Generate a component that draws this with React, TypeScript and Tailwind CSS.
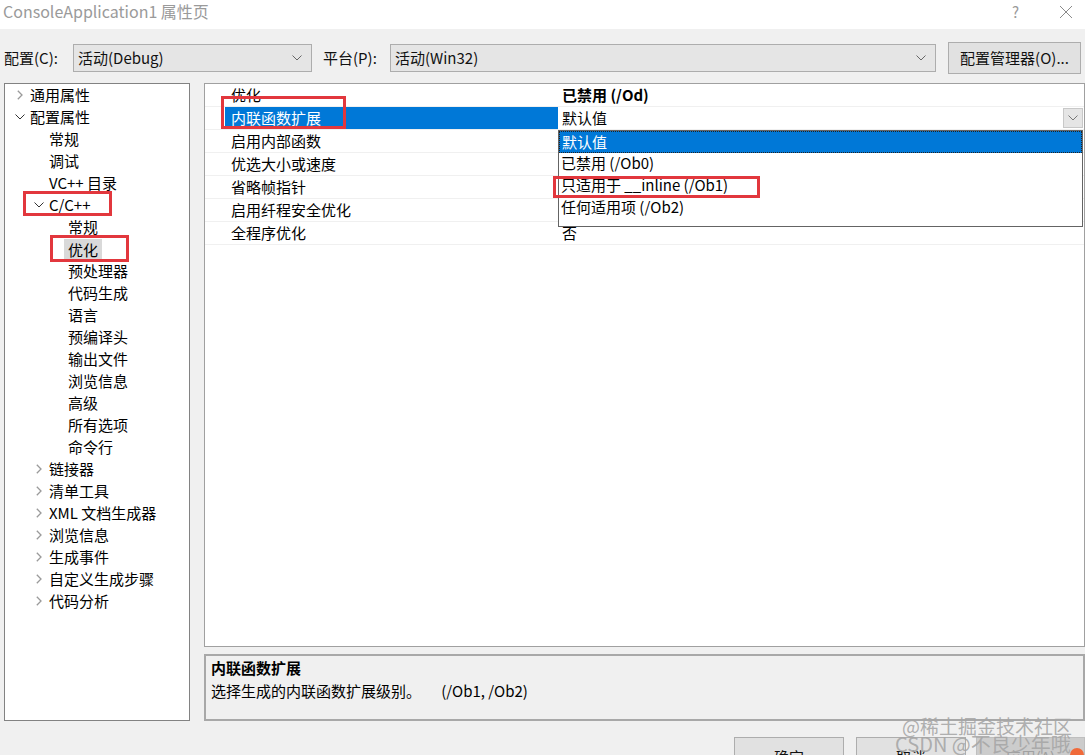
import React from "react";

const FONT = '"Noto Sans CJK SC", "Noto Sans", sans-serif';

type TreeItem = {
  label: string;
  level: 0 | 1 | 2;
  arrow?: "right" | "down";
  selected?: boolean;
};

const tree: TreeItem[] = [
  { label: "通用属性", level: 0, arrow: "right" },
  { label: "配置属性", level: 0, arrow: "down" },
  { label: "常规", level: 1 },
  { label: "调试", level: 1 },
  { label: "VC++ 目录", level: 1 },
  { label: "C/C++", level: 1, arrow: "down" },
  { label: "常规", level: 2 },
  { label: "优化", level: 2, selected: true },
  { label: "预处理器", level: 2 },
  { label: "代码生成", level: 2 },
  { label: "语言", level: 2 },
  { label: "预编译头", level: 2 },
  { label: "输出文件", level: 2 },
  { label: "浏览信息", level: 2 },
  { label: "高级", level: 2 },
  { label: "所有选项", level: 2 },
  { label: "命令行", level: 2 },
  { label: "链接器", level: 1, arrow: "right" },
  { label: "清单工具", level: 1, arrow: "right" },
  { label: "XML 文档生成器", level: 1, arrow: "right" },
  { label: "浏览信息", level: 1, arrow: "right" },
  { label: "生成事件", level: 1, arrow: "right" },
  { label: "自定义生成步骤", level: 1, arrow: "right" },
  { label: "代码分析", level: 1, arrow: "right" },
];

// values of rows 3-6 sit under the open list, so they are left empty
const props = [
  { name: "优化", value: "已禁用 (/Od)", bold: true },
  { name: "内联函数扩展", value: "默认值", selected: true },
  { name: "启用内部函数", value: "" },
  { name: "优选大小或速度", value: "" },
  { name: "省略帧指针", value: "" },
  { name: "启用纤程安全优化", value: "" },
  { name: "全程序优化", value: "否" },
];

const options = ["默认值", "已禁用 (/Ob0)", "只适用于 __inline (/Ob1)", "任何适用项 (/Ob2)"];

function ChevronDown({ color = "#555" }: { color?: string }) {
  return (
    <svg width="10" height="6" viewBox="0 0 10 6">
      <path d="M0.5 0.5 L5 5 L9.5 0.5" fill="none" stroke={color} strokeWidth="1" />
    </svg>
  );
}

function ChevronRight() {
  return (
    <svg width="6" height="10" viewBox="0 0 6 10">
      <path d="M0.8 0.8 L5 5 L0.8 9.2" fill="none" stroke="#9a9a9a" strokeWidth="1.3" />
    </svg>
  );
}

function Combo({ text, className }: { text: string; className: string }) {
  return (
    <div
      className={`h-[28px] flex items-center justify-between border border-[#adadad] bg-[#e5e5e5] pl-[4px] pr-[9px] text-[15px] text-[#111] ${className}`}
    >
      <span>{text}</span>
      <ChevronDown color="#666" />
    </div>
  );
}

function Tree() {
  const pad = ["pl-[5px]", "pl-[24px]", "pl-[43px]"];
  return (
    <div className="w-[186px] h-full bg-white border border-[#828282]">
      {tree.map((t, i) => (
        <div key={i} className={`h-[22px] flex items-center ${pad[t.level]} text-[15px] leading-[20px] text-black`}>
          <span className="w-[20px] flex items-center pl-[7px]">
            {t.arrow === "right" && <ChevronRight />}
            {t.arrow === "down" && (
              <span className="-ml-[2px]">
                <ChevronDown color="#333" />
              </span>
            )}
          </span>
          <span className={t.selected ? "bg-[#d9d9d9] -ml-[4px] px-[4px] leading-[21px]" : ""}>{t.label}</span>
        </div>
      ))}
    </div>
  );
}

function PropertyGrid() {
  return (
    <div className="relative h-[564px] bg-white border border-[#a0a0a0]">
      <div className="flex flex-col">
        {props.map((p, i) => (
          <div key={i} className="h-[23px] flex text-[15px] leading-[22px] border-b border-[#f0f0f0]">
            <div className="w-[20px] bg-white" />
            <div className={`w-[333px] pl-[6px] ${p.selected ? "bg-[#0078d7] text-white" : "text-black"}`}>
              {p.name}
            </div>
            {p.selected ? (
              <div className="flex-1 flex items-center justify-between pl-[4px] pr-[1px]">
                <span>{p.value}</span>
                <span className="w-[20px] h-[20px] flex items-center justify-center bg-[#e5e5e5] border border-[#c8c8c8]">
                  <ChevronDown color="#777" />
                </span>
              </div>
            ) : (
              <div className={`flex-1 pl-[4px] text-black ${p.bold ? "font-bold" : ""}`}>{p.value}</div>
            )}
          </div>
        ))}
      </div>

      {/* open dropdown list */}
      <div className="absolute left-[353px] top-[46px] w-[525px] h-[97px] bg-white border border-[#646464] text-[15px] leading-[20px]">
        {options.map((o, i) => (
          <div
            key={i}
            className={`h-[22px] pl-[2px] whitespace-pre ${
              i === 0 ? "bg-[#0078d7] text-white border border-dotted border-[#222]" : "text-black"
            }`}
          >
            {o}
          </div>
        ))}
      </div>
    </div>
  );
}

function Description() {
  return (
    <div className="h-[67px] bg-[#f0f0f0] border-2 border-[#a8a8a8] px-[5px] text-[15px] leading-[23px] text-black">
      <div className="font-bold">内联函数扩展</div>
      <div className="whitespace-pre">选择生成的内联函数扩展级别。      (/Ob1, /Ob2)</div>
    </div>
  );
}

function RedBox({ className }: { className: string }) {
  return <div className={`absolute border-[3px] border-[#e2373d] pointer-events-none ${className}`} />;
}

export default function App() {
  return (
    <div
      className="relative w-[1085px] h-[755px] overflow-hidden bg-[#f0f0f0] flex flex-col"
      style={{ fontFamily: FONT }}
    >
      {/* title bar */}
      <div className="h-[29px] shrink-0 bg-white flex items-start justify-between pl-[3px] pr-[12px] pt-[1px]">
        <span className="text-[16px] leading-[20px] text-[#9a9a9a]">ConsoleApplication1 属性页</span>
        <div className="flex items-center gap-[40px] pt-[3px]">
          <span className="text-[15px] leading-[16px] text-[#9a9a9a]">?</span>
          <svg width="14" height="14" viewBox="0 0 14 14">
            <path d="M1 1 L13 13 M13 1 L1 13" stroke="#8a8a8a" strokeWidth="1" />
          </svg>
        </div>
      </div>

      {/* configuration row */}
      <div className="h-[32px] mt-[13px] shrink-0 flex items-center pl-[4px] text-[15px] text-[#111]">
        <span className="w-[69px]">配置(C):</span>
        <Combo text="活动(Debug)" className="w-[239px]" />
        <span className="ml-[11px] w-[67px]">平台(P):</span>
        <Combo text="活动(Win32)" className="w-[546px]" />
        <button className="ml-[12px] h-[32px] w-[133px] border border-[#adadad] bg-[#e1e1e1] text-[15px] text-[#111]">
          配置管理器(O)...
        </button>
      </div>

      {/* main */}
      <div className="h-[638px] mt-[9px] shrink-0 flex gap-[14px] pl-[4px]">
        <Tree />
        <div className="flex-1 flex flex-col gap-[7px]">
          <PropertyGrid />
          <Description />
        </div>
      </div>

      {/* bottom buttons */}
      <div className="mt-[16px] flex gap-[12px] pl-[734px] text-[15px]">
        <button className="w-[111px] h-[32px] border border-[#adadad] bg-[#e1e1e1] text-[#111] leading-[30px] pt-[4px]">确定</button>
        <button className="w-[111px] h-[32px] border border-[#adadad] bg-[#e1e1e1] text-[#111] leading-[30px] pt-[4px]">取消</button>
        <button className="w-[110px] h-[32px] -ml-[2px] border border-[#bfbfbf] bg-[#cccccc] text-[#a0a0a0] leading-[30px] pt-[4px]">应用(A)</button>
      </div>

      {/* annotations */}
      <RedBox className="left-[221px] top-[96px] w-[125px] h-[33px]" />
      <RedBox className="left-[23px] top-[191px] w-[89px] h-[25px]" />
      <RedBox className="left-[50px] top-[235px] w-[79px] h-[27px]" />
      <RedBox className="left-[553px] top-[176px] w-[207px] h-[22px]" />

      {/* watermark */}
      <div className="absolute left-[902px] top-[716px] text-[19px] leading-[20px] text-[#a6a6a6]/90 pointer-events-none">
        @稀土掘金技术社区
      </div>
      <div className="absolute left-[895px] top-[733px] text-[20px] leading-[22px] text-[#a6a6a6]/90 pointer-events-none">
        CSDN @不良少年哦
      </div>
      <div className="absolute left-[1070px] top-[748px] w-[14px] h-[8px] bg-[#f06a3a] rounded-t-full" />
    </div>
  );
}
